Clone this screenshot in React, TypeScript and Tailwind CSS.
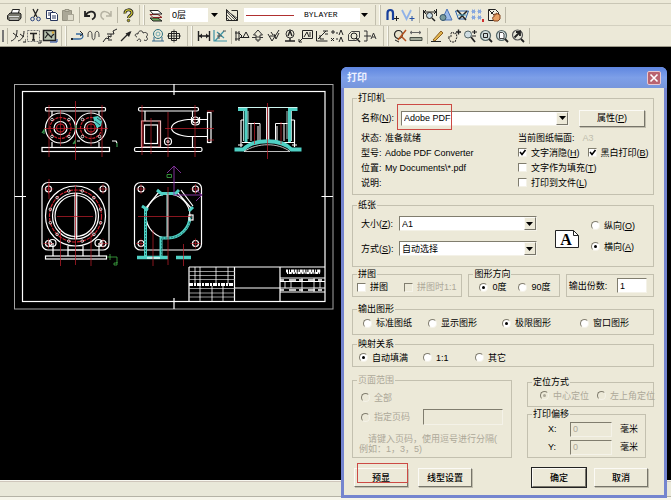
import type { ReactNode } from "react"

const RED = "#c4202c"
const CYAN = "#4fd0c4"
const INK = "#222"

const icons: Record<string, ReactNode> = {
    print: (
        <>
            <path d="M5 7 6.500 2.500h7L12 7" fill="#fff" stroke={INK} />
            <path d="M2.500 7.500 4 6h10l1 1v4l-2 2.500H3L1.500 12V8.500z" fill="#77776c" stroke={INK} />
            <path d="M3 9.500h10M4 12h8" stroke="#ddd" />
        </>
    ),
    cut: (
        <>
            <path d="M5 2l4 8M10 2 6 10" stroke={INK} strokeWidth="1.300" />
            <circle cx="4.500" cy="12" r="1.800" stroke="#26407c" />
            <circle cx="10.500" cy="12" r="1.800" stroke="#26407c" />
        </>
    ),
    copy: (
        <>
            <path d="M2.500 3.500h5l2 2v6h-7z" fill="#fff" stroke="#26345c" />
            <path d="M6.500 5.500h5l2 2v6h-7z" fill="#fff" stroke="#26345c" />
            <path d="M4 6h2M4 8h2M8 9h4M8 11h4" stroke="#26345c" />
        </>
    ),
    paste: (
        <>
            <path d="M2.500 3.500h9v10h-9z" fill="#aaa797" stroke="#959282" />
            <path d="M5 2.500h4v2H5z" fill="#c5c2b2" stroke="#959282" />
            <path d="M7.500 7.500h6v6h-6z" fill="#dedbcb" stroke="#a8a595" />
        </>
    ),
    undo: <path d="M3 4v5h5M3.500 8.500C6 4 12 3 13 7.500c.4 2-1 4-3 5" stroke={INK} strokeWidth="1.800" />,
    redo: <path d="M13 4v5H8M12.500 8.500C10 4 4 3 3 7.500c-.4 2 1 4 3 5" stroke="#b5b2a2" strokeWidth="1.500" />,
    help: (
        <>
            <path d="M5 6.500C4.500 2 12 1.500 12 6c0 2.500-3.500 2.500-3.500 5" stroke={INK} strokeWidth="3" />
            <path d="M5 6.500C4.500 2 12 1.500 12 6c0 2.500-3.500 2.500-3.500 5" stroke="#d9cf35" strokeWidth="1.200" />
            <circle cx="8.500" cy="13.500" r="1.300" fill="#a89e20" stroke={INK} strokeWidth=".7" />
        </>
    ),
    layers: (
        <>
            <path d="M2 11h8l4 3H5z" fill="#6ea85e" stroke={INK} />
            <path d="M2 7.500h8l4 3H5z" fill="#e2e2d8" stroke="#8c2222" />
            <path d="M2 3.500h8l4 3.500H5z" fill="#fff" stroke={INK} />
        </>
    ),
    linetype: (
        <>
            <path d="M2.500 2.500 13.500 13.500M2.500 2.500v11h11v-10h-6" stroke={INK} />
            <path d="M3 5l8 8M3 8l5 5M3 11l2 2M3 4l10 7" stroke="#555" />
        </>
    ),
    snap: (
        <>
            <path d="M3.500 13V6c0-4 5.500-4 5.500 0v7" stroke="#173f9c" strokeWidth="2.200" />
            <path d="M10 11.500h5M12.500 9v5" stroke={INK} />
        </>
    ),
    snapV: (
        <>
            <path d="M2 3l4.500 9L11 3" stroke="#8fb2e8" strokeWidth="1.800" />
            <path d="M9.500 11.500h5M12 9v5" stroke="#2450a4" />
        </>
    ),
    findDim: (
        <>
            <path d="M1.500 3v9M14.500 2v7M2 5h12M4 3 2 5l2 2M12 3l2 2-2 2" stroke={INK} />
            <circle cx="7.500" cy="8.500" r="3" fill="#c7dce8" stroke={INK} />
            <path d="M10 11l3 3" stroke={INK} strokeWidth="1.500" />
        </>
    ),
    prism: (
        <>
            <path d="M9 2 4 13h10z" fill="#9bbbe9" stroke="#4972b8" />
            <circle cx="5" cy="10.500" r="3" fill="#7a9c9c" stroke="#35566c" />
        </>
    ),
    tools: (
        <>
            <path d="M1.500 4h13l-3 8h-7z" stroke="#2861ac" />
            <path d="M3 3l9 10M13 4 5 12" stroke={INK} strokeWidth="1.500" />
            <path d="M4 8h8" stroke="#45a0c8" />
        </>
    ),
    grid: (
        <>
            <path d="M2 3h3v3H2zM8 3h3v3H8zM2 9h3v3H2zM8 9h3v3H8z" fill="#88aae0" stroke="#83a2dc" strokeDasharray="1 1" />
            <path d="M13 12v3" stroke="#d03030" strokeWidth="2" />
        </>
    ),
    drag: (
        <>
            <path d="M2.500 2.500h7l3 3v8h-10z" fill="#f5f2e5" stroke={INK} />
            <path d="M3 3l9 9M5 7l3-3" stroke={INK} />
            <path d="M8 14c-2-3-2-4 0-4V7l2 1V6l2 1 2 1v4l-2 2z" fill="#e7a065" stroke="#82451f" />
        </>
    ),
    arcs: <path d="M1 13C5 12 7 8 7 2M3 5l5 4M8 13c4-1 6-5 6-10M10 6l4 3M13 14h3v-3" stroke={INK} />,
    text: (
        <>
            <path d="M1.500 2.500h12v11h-12z" stroke="#777" strokeDasharray="2 1" />
            <path d="M4 5.500h7M7.500 5v7M6 12h3" stroke={INK} strokeWidth="1.600" />
            <path d="M12 15h3v-3" stroke={INK} />
        </>
    ),
    image: (
        <>
            <path d="M1.500 2.500h12v10h-12z" fill="#b9c4b0" stroke={INK} strokeWidth="1.500" />
            <path d="M3 10l3-4 3 3 3-3M4 4l6 6" stroke={INK} strokeWidth="1.200" />
            <circle cx="11" cy="4.500" r="1.200" fill="#d9a83c" />
            <path d="M8 14h7v-3" stroke="#173f9c" />
        </>
    ),
    polyline: (
        <>
            <path d="M2 11h7c5 0 5-5 1-5H6" stroke="#356aa0" strokeWidth="1.300" />
            <path d="M10 3l3 3-3 2" stroke={INK} />
            <path d="M1 10h2v2H1z" fill={INK} />
        </>
    ),
    wave: <path d="M2 7c0-5 4-5 4 0v1c0 5 3 5 3 0V7c0-5 4-5 4 0M2 7v2M13 7v2" stroke="#444" />,
    zigzag: <path d="M1 14l3-4 3 1-1-3 3 1 0-3 3 0-1-3 4-2M5 6h4M6 12h4" stroke={INK} />,
    arrow: (
        <>
            <path d="M3 13 12 4" stroke={INK} strokeWidth="1.300" />
            <path d="M13.500 3 11 9 7.500 5.500z" fill={INK} />
        </>
    ),
    cloud: (
        <path d="M3 9C0 8 1 5 4 6c0-4 5-4 5-1 4-2 6 2 3 4 3 1 1 5-2 3M3 13c2-4 5-1 3 1" stroke="#333" />
    ),
    bubble: (
        <>
            <circle cx="8" cy="6" r="4.500" stroke="#2e7180" />
            <circle cx="8" cy="6" r="2" stroke="#71a9b2" />
            <path d="M2 13h12M4 13V9M12 13V9" stroke="#36698c" />
        </>
    ),
    hole: (
        <>
            <path d="M2.500 5.500h11v5h-11zM5.500 3.500h5v9h-5z" stroke={INK} />
            <path d="M8 1.500v13M1 8h14" stroke={INK} strokeWidth=".8" />
        </>
    ),
    dim: (
        <>
            <path d="M2.500 3v10M13.500 3v10M3 8h10" stroke={INK} strokeWidth="1.400" />
            <path d="M3 8l3-2.500v5zM13 8l-3-2.500v5z" fill={INK} />
        </>
    ),
    dimAngle: (
        <>
            <path d="M2 2v11h13M3 13l9-10M5 4l7 6" stroke="#3c93a4" strokeWidth="1.200" />
            <path d="M5 8h5M7 5v6M11 3h3" stroke="#555" />
        </>
    ),
    datum: <path d="M2 3v10M1 5h4l3 3-3 3H1M7 9.500h8M9 9.500 12 4l3 5.500M5 3v10" stroke={INK} />,
    height: <path d="M8 2 3.500 7H6v5h4V7h2.500zM6 9h4M2 9.500h4M10 9.500h3M8 12v2" stroke="#333" />,
    rough: <path d="M2 6l4 7 7-11M4 8h5M8 6l2 5 3-6M5 4l2 3" stroke={INK} />,
    weld: (
        <>
            <circle cx="8" cy="6" r="4" stroke="#333" />
            <path d="M6 8l2-5 2 5M3 13h10M8 10v3" stroke={INK} strokeWidth="1.400" />
        </>
    ),
    leader: <path d="M4.500 2.500h10v8h-10zM1 14l4-4M1 11v3h3M6 9l3-5 2 5M12 4v5" stroke={INK} />,
    section: <path d="M2.500 3v10h11M4 11l8-8M6 7v4h4M9 3h5M11 6h3" stroke={INK} />,
    mirror: <path d="M1 4h4M3 2v4M9 7l2-5 2 5M1 10l3 3M4 10l-3 3M9 14l2-5 2 5M6 5h2M6 11h2" stroke={INK} />,
    lookup: (
        <>
            <path d="M2.500 6.500l3-3h8v6l-3 3h-8z" stroke="#444" />
            <circle cx="8" cy="8" r="3" stroke={INK} />
            <path d="M10 10l4 4" stroke={INK} strokeWidth="1.600" />
        </>
    ),
    branch: <path d="M2 3h3v10H2M2 8h7M9 11l2.500-6 2.500 6M10 9h3" stroke="#333" />,
    erase: (
        <>
            <circle cx="6.500" cy="6.500" r="4" fill="#e8e2cc" stroke={INK} strokeWidth="1.200" />
            <path d="M14 2 6 12M9 8l5 5" stroke="#b4521f" strokeWidth="1.500" />
            <path d="M3 12l4 2" stroke={INK} />
        </>
    ),
    ruler: (
        <>
            <path d="M2 4.500h11M4 3 2 4.500 4 6M11 3l2 1.500L11 6" stroke="#666" />
            <path d="M2 9.500h12v3H2z" fill="#a3a99a" stroke="#474e46" />
        </>
    ),
    pencil: (
        <>
            <path d="M3 12 11 3l2 2-8 8z" fill="#e2b64f" stroke="#8b5e22" />
            <path d="M1 13.500h10" stroke={INK} />
        </>
    ),
    pan: (
        <>
            <path d="M5 14 2 9l3 0V5l2-1 1 2 2-1 1 4-2 5z" fill="#eee8d4" stroke={INK} strokeDasharray="2 1" />
            <path d="M10 4h5M12.500 1.500v5" stroke={INK} strokeWidth="1.400" />
        </>
    ),
    zoom: (
        <>
            <circle cx="6" cy="6.500" r="3.500" fill="#cfdde2" stroke="#566" />
            <path d="M9 9l4 5" stroke={INK} strokeWidth="1.700" />
            <path d="M10 4h5M12.500 2v4M10 8h4" stroke={INK} strokeWidth="1.200" />
        </>
    ),
    zoomWindow: (
        <>
            <circle cx="7.500" cy="7.500" r="5" fill="#cfdcdc" stroke="#566" strokeWidth="1.200" />
            <path d="M5.500 5.500h4v4h-4z" stroke={INK} />
            <path d="M11 11l3 3" stroke={INK} strokeWidth="1.800" />
        </>
    ),
    zoomPage: (
        <>
            <circle cx="7.500" cy="7.500" r="5" fill="#cfdcdc" stroke="#566" strokeWidth="1.200" />
            <path d="M5.500 4.500h3l1.500 1.500v4.500H5.500z" fill="#fff" stroke="#444" />
            <path d="M11 11l3 3" stroke={INK} strokeWidth="1.800" />
        </>
    ),
    zoomBack: (
        <>
            <circle cx="7.500" cy="7" r="5" fill="#e5e5d8" stroke="#555" strokeWidth="1.200" />
            <path d="M4.500 9.500 10 4v4M10 4H6" stroke={INK} strokeWidth="1.800" />
            <path d="M11 11l3 3" stroke={INK} strokeWidth="1.800" />
        </>
    ),
}

function Tool({ name }: { name: string }) {
    return (
        <button type="button" aria-label={name} className="w-4 h-4 shrink-0">
            <svg viewBox="0 0 16 16" className="w-4 h-4" fill="none">{icons[name]}</svg>
        </button>
    )
}

function Tools({ names }: { names: string[] }) {
    return <>{names.map((name) => <Tool key={name} name={name} />)}</>
}

function Sep() {
    return (
        <div className="w-1.5 h-4 shrink-0 flex justify-center">
            <div className="w-px bg-[#bab7a6]" />
        </div>
    )
}

function Grip() {
    return (
        <div className="w-3 h-5 shrink-0 flex justify-center gap-[3px]">
            <div className="w-px bg-[#c2bfae]" />
            <div className="w-0.5 bg-[#faf9f2] border-r border-[#c2bfae]" />
        </div>
    )
}

function Triangle() {
    return (
        <svg viewBox="0 0 7 4" className="w-[7px] h-1" fill="#000">
            <path d="M0 0h7L3.500 4z" />
        </svg>
    )
}

function Toolbars() {
    return (
        <header className="bg-[#ece9d8] border-b border-[#9c9989] overflow-hidden">
            <div className="h-1 border-b border-[#c9c6b5]" />
            <div className="h-[22px] flex items-center pl-1.5 border-b border-[#d3d0c0]">
                <Tool name="print" />
                <Sep />
                <Tools names={["cut", "copy", "paste"]} />
                <Sep />
                <Tools names={["undo", "redo"]} />
                <Sep />
                <Tool name="help" />
                <Grip />
                <Tool name="layers" />
                <div className="relative ml-1.5 w-[52px] shrink-0">
                    <select aria-label="图层" className="block appearance-none w-[38px] h-3.5 bg-white pl-0.5 text-[9px] leading-[14px]">
                        <option>0层</option>
                    </select>
                    <span className="absolute right-1 top-[5px] pointer-events-none"><Triangle /></span>
                </div>
                <span className="ml-0.5 flex"><Tool name="linetype" /></span>
                <div className="relative ml-1 w-32 shrink-0">
                    <select
                        aria-label="线型"
                        className="block appearance-none w-[116px] h-3.5 bg-white pl-[60px] font-['Liberation_Mono',monospace] text-[8px] leading-[14px]"
                    >
                        <option>BYLAYER</option>
                    </select>
                    <span className="absolute left-0.5 top-[7px] w-12 h-px bg-[#b03030] pointer-events-none" />
                    <span className="absolute right-1 top-[5px] pointer-events-none"><Triangle /></span>
                </div>
                <Grip />
                <Tools names={["snap", "snapV"]} />
                <Sep />
                <Tools names={["findDim", "prism", "tools", "grid", "drag"]} />
                <Sep />
            </div>
            <div className="h-5 flex items-center">
                <div className="w-1 h-3 shrink-0 border-r-2 border-[#777]" />
                <Sep />
                <Tools names={["arcs", "text", "image"]} />
                <Grip />
                <div className="flex pr-0.5">
                    <Tools names={["polyline", "wave", "zigzag", "arrow", "cloud", "bubble", "hole"]} />
                </div>
                <Grip />
                <Tools names={["dim", "dimAngle"]} />
                <Sep />
                <div className="flex pr-0.5">
                    <Tools names={["datum", "height", "rough", "weld", "leader", "section", "mirror", "lookup", "branch"]} />
                </div>
                <Grip />
                <Tools names={["erase", "ruler"]} />
                <Sep />
                <Tools names={["pencil", "pan", "zoom", "zoomWindow", "zoomPage", "zoomBack"]} />
                <Sep />
            </div>
        </header>
    )
}

function Bolts({ cx, cy, r, count, start }: { cx: number; cy: number; r: number; count: number; start: number }) {
    return (
        <>
            {Array.from({ length: count }, (_, i) => {
                const a = ((start + (i * 360) / count) * Math.PI) / 180
                return <circle key={i} cx={cx + r * Math.cos(a)} cy={cy + r * Math.sin(a)} r="1.300" strokeWidth=".8" />
            })}
        </>
    )
}

function Impeller({ cx }: { cx: number }) {
    return (
        <>
            <circle cx={cx} cy="128" r="15" />
            <circle cx={cx} cy="128" r="10.500" stroke={RED} strokeDasharray="3 1" />
            <circle cx={cx} cy="128" r="6.500" />
            <circle cx={cx} cy="128" r="4" stroke={RED} />
            <Bolts cx={cx} cy={128} r={12} count={4} start={45} />
            <path d={`M${cx} 110v36`} stroke={RED} strokeWidth=".6" />
        </>
    )
}

function Plate({ x }: { x: number }) {
    return (
        <>
            <rect x={x} y="182.500" width="67" height="67.500" rx="6" />
            {[[6.5, 189], [61, 189], [6.5, 243.500], [61, 243.500]].map(([dx, y]) => (
                <g key={`${dx}-${y}`}>
                    <circle cx={x + dx} cy={y} r="3" />
                    <path d={`M${x + dx - 5} ${y}h10M${x + dx} ${y - 5}v10`} stroke={RED} strokeWidth=".6" />
                </g>
            ))}
        </>
    )
}

function Sheet() {
    return (
        <svg viewBox="14 84 320 226" className="w-80 shrink-0" fill="none" stroke="#fff" strokeWidth="1.200">
            <rect x="14.500" y="84.500" width="318.500" height="224.500" stroke="#a5a5a5" strokeWidth="1" />
            <rect x="22.500" y="91.500" width="302.500" height="210" />
            <path d="M174 84v11M174 298v11M14.500 196.500h11.500M321.500 196.500h11.500" />

            {/* front view */}
            <rect x="45.500" y="107.500" width="60" height="3.500" rx="1" />
            <path d="M52 111v5M99 111v4M52 142v5M99 142v5" />
            <rect x="42" y="147.500" width="67.500" height="4" />
            <Impeller cx={60.5} />
            <Impeller cx={91} />
            <path d="M75.500 101v59M44 128.500h64M49 105v52M102 105v52" stroke={RED} strokeWidth=".7" />
            <path d="M93 117l5-1 4 5-1 5-4 2-2-4z" fill={CYAN} stroke="none" />
            <path d="M95 121l5 4M97 118l4 3" stroke="#123" strokeWidth=".8" />
            <path d="M42 133l2-3v4M73 144l2-3v3M76 125v5M117 143v4" stroke="#3a9a50" />
            <path d="M112 141h4l1 2M77 141h3" />

            {/* side view */}
            <rect x="138.500" y="107.500" width="60" height="3.500" rx="1.500" />
            <path d="M145 111v10M192.500 111v6M192.500 137v10" />
            <rect x="141.500" y="121" width="19" height="26" stroke="#e8b9b9" />
            <rect x="144.500" y="125" width="13" height="18.500" />
            <rect x="134.500" y="147.500" width="67.500" height="4" rx="1.500" />
            <path d="M207 119.500h-19c-22 2-22 15 0 17h19" />
            <rect x="207.500" y="112.500" width="3.500" height="30" />
            <path d="M191.500 117v5c0 4 8 4 8 0v-5" />
            <circle cx="195.500" cy="120" r="3" />
            <circle cx="168" cy="141.500" r="3.500" />
            <circle cx="168" cy="141.500" r="1" />
            <path d="M151 118v36M168 112v45M165 128.500h49M143 121v26M159 121v26M207 111h7M207 140h7M142 105v50M195 105v52" stroke={RED} strokeWidth=".7" />

            {/* cross section */}
            <path d="M238 107.500h59.500" stroke="#cdf5f0" />
            <path d="M238 109.500h8v33M297.500 109.500h-8v33" stroke={CYAN} strokeWidth="3" />
            <path d="M243.500 111v30M248 111v28M287 111v28M291.500 111v30" stroke="#d6fffa" strokeWidth=".8" />
            <path d="M266.700 108v33M268.700 108v33M241 120v27M241 120h3M294.500 120v27M291 120h3.500M242 142.500h52" />
            <path d="M248 123.500h12v17M251 123v18M258 126v15M275.500 141v-17.500h12M277 126v15M284 123v18" strokeWidth="1" />
            <path d="M234.500 149.500h9c10-11 38-11 48 0h10" stroke={CYAN} strokeWidth="4" />
            <path d="M244 151.500c14-9 34-9 46 0z" fill="#000" stroke="#eee" strokeWidth=".8" />
            <path d="M238 145h5M292 145h5" />
            <path d="M267.500 103v56M254.500 122v22M281 122v22" stroke={RED} strokeWidth=".7" />

            {/* round flange */}
            <Plate x={42} />
            <circle cx="75.500" cy="216" r="30" fill="#000" />
            <circle cx="75.500" cy="216" r="26" stroke={RED} strokeDasharray="4 1" />
            <circle cx="75.500" cy="216" r="23" />
            <circle cx="75.500" cy="216" r="20.500" />
            <Bolts cx={75.5} cy={216} r={26} count={12} start={15} />
            <path d="M75 193v46M76.700 193v46" />
            <path d="M53 243v13M68 246v10M83 246v10M99 243v13M68 250h15" />
            <circle cx="52.500" cy="243" r="3.500" />
            <circle cx="98.500" cy="243" r="3.500" />
            <rect x="45.500" y="256" width="61" height="3" />
            <path d="M49 179v20M57 216.500h36M60.500 230v36M91 230v36M75.500 185v80" stroke={RED} strokeWidth=".7" />
            <path d="M107 257h10v6h-3v2h3v-3M110 254v6" stroke="#3fae45" strokeWidth=".8" />

            {/* cut flange */}
            <Plate x={134.5} />
            <circle cx="168" cy="216" r="22" />
            <path d="M146 208l13-16M177 192l14 16M181 190l12 16" />
            <path d="M190 216c0 12-10 22-22 22h-7v18M145.500 208v48M162 193.500h14" stroke={CYAN} strokeWidth="3" />
            <path d="M190.500 216c0 12-10 22-22 22h-7v18M145.500 208v48" stroke="#125a55" strokeWidth=".8" strokeDasharray="2 1" />
            <path d="M142 206l6 4M157 190l6 5M175 194l4-4M189 211l4-4" stroke={CYAN} strokeWidth="3" />
            <rect x="189" y="215" width="4" height="5" />
            <path d="M167.500 194v43" stroke="#a5eee6" strokeWidth="2" />
            <path d="M137 257.500h31M176 257.500h15" stroke={CYAN} strokeWidth="3.500" />
            <path d="M147 258h13" />
            <path d="M138 216.500h53M153 230v36M168 187v78M183.500 244v22" stroke={RED} strokeWidth=".7" />
            <path d="M174 167v28h28M167 173l7-7 7 7M196 190l6 5-6 6" stroke="#8d35a8" strokeWidth=".9" />
            <path d="M167 174.500h4.500v3H167z" stroke="#3fae45" strokeWidth=".8" />

            {/* title block */}
            <path d="M189 267h136M189 267v34M234.500 267v34M280 267v34M234.500 288h45.500" />
            <path d="M189 271.500h45.500M189 275.500h45.500M189 279.500h45.500M189 288.500h45.500M189 293h45.500M189 297h45.500" stroke="#bbb" strokeWidth=".8" />
            <path d="M195 267v19M200 267v34M216 267v17M228 267v17M212 286v15M223 286v15" strokeWidth=".8" />
            <path d="M189 284.500h45.500" strokeWidth="3" strokeDasharray="4 1 2 1" />
            <path d="M286 271h35" strokeWidth="3" strokeDasharray="2 1 1 1 3 .7" />
            <path d="M287 273h33" strokeWidth="2" strokeDasharray="1 .8 3 1 2 1" />
            <path d="M280 278h45M280 281.500h45M280 288h45M280 292h45" strokeWidth="1" />
            <path d="M280 280h45M280 290h45" strokeWidth="1.500" strokeDasharray="4 5 7 3" />
            <path d="M285 282v6M291 282v6M302 278v14M314 278v14M320 282v6" strokeWidth=".8" />
        </svg>
    )
}

function Group({ title, className = "", muted = false, children }: { title: string; className?: string; muted?: boolean; children: ReactNode }) {
    return (
        <fieldset className={`min-w-0 border border-[#c3c0af] ${className}`}>
            <legend className={`ml-1 px-px h-3 leading-3 ${muted ? "text-[#aca899]" : ""}`}>{title}</legend>
            {children}
        </fieldset>
    )
}

function Check({ label, hotkey, checked, disabled }: { label: string; hotkey?: string; checked?: boolean; disabled?: boolean }) {
    return (
        <label className={`relative flex items-center gap-1 whitespace-nowrap ${disabled ? "text-[#aca899]" : ""}`}>
            <input
                type="checkbox"
                defaultChecked={checked}
                disabled={disabled}
                className="peer appearance-none size-[9px] shrink-0 border border-t-[#807d6e] border-l-[#807d6e] border-b-[#f4f2e8] border-r-[#f4f2e8] bg-white disabled:bg-[#ece9d8]"
            />
            <svg viewBox="0 0 9 9" className="absolute left-0 size-[9px] hidden peer-checked:block pointer-events-none" fill="none">
                <path d="M2 4l2 2.500L7.500 2" stroke="#000" strokeWidth="1.600" />
            </svg>
            <span>{label}{hotkey && <>(<u>{hotkey}</u>)</>}</span>
        </label>
    )
}

function Radio({ name, label, hotkey, checked, disabled }: { name: string; label: string; hotkey?: string; checked?: boolean; disabled?: boolean }) {
    return (
        <label className={`flex items-center gap-1 whitespace-nowrap ${disabled ? "text-[#aca899]" : ""}`}>
            <input
                type="radio"
                name={name}
                defaultChecked={checked}
                disabled={disabled}
                className="appearance-none size-[9px] shrink-0 rounded-full border border-t-[#807d6e] border-l-[#807d6e] border-b-[#f4f2e8] border-r-[#f4f2e8] bg-white flex items-center justify-center before:size-[3px] before:rounded-full checked:before:bg-black disabled:bg-[#ece9d8] disabled:checked:before:bg-[#aca899]"
            />
            <span>{label}{hotkey && <>(<u>{hotkey}</u>)</>}</span>
        </label>
    )
}

function Combo({ id, value }: { id: string; value: string }) {
    return (
        <div className="relative flex-1">
            <select
                id={id}
                className="block appearance-none w-full h-[15px] bg-white border border-t-[#807d6e] border-l-[#807d6e] border-[#f4f2e8] pl-0.5 leading-3"
            >
                <option>{value}</option>
            </select>
            <span className="absolute right-px top-px h-[13px] w-3 flex items-center justify-center bg-[#ece9d8] border border-[#fbfaf5] border-r-[#77756a] border-b-[#77756a] pointer-events-none">
                <Triangle />
            </span>
        </div>
    )
}

const field = "border border-t-[#807d6e] border-l-[#807d6e] border-[#f4f2e8] pl-0.5"
const button = "bg-[#ece9d8] border border-[#fbfaf5] border-r-[#77756a] border-b-[#77756a] shadow-[1px_1px_0_#c0bdad]"

function PrintDialog() {
    return (
        <div
            role="dialog"
            aria-label="打印"
            className="absolute right-1 top-5 w-[326px] rounded-t-md border-[3px] border-t-0 border-[#7585cf] bg-[#ece9d8] text-[9px] leading-3 text-black"
        >
            <div className="-mx-[3px] h-[21px] px-1.5 flex items-center justify-between rounded-t-md bg-linear-to-b from-[#5f86e0] via-[#7d9fe8] to-[#7796dc]">
                <h1 className="font-bold text-[10px] text-[#eef2ff]">打印</h1>
                <button type="button" aria-label="关闭" className="size-3.5 rounded-xs border border-[#e8c8d0] bg-[#b9636f] flex items-center justify-center">
                    <svg viewBox="0 0 10 10" className="size-2.5" fill="none" stroke="#fff" strokeWidth="1.600">
                        <path d="M1.500 1.500l7 7M8.500 1.500l-7 7" />
                    </svg>
                </button>
            </div>

            <form className="pt-1 pl-2 pr-2.5 pb-2" onSubmit={(event) => event.preventDefault()}>
                <Group title="打印机" className="pb-1">
                    <div className="relative mt-1 h-5 flex items-center pl-2 pr-2">
                        <label htmlFor="printer" className="w-10">名称(<u>N</u>):</label>
                        <Combo id="printer" value="Adobe PDF" />
                        <button type="button" className={`ml-2.5 w-[66px] h-[17px] ${button}`}>属性(<u>P</u>)</button>
                        <span className="absolute left-11 -top-1 w-[55px] h-[26px] border border-[#cc4a44] pointer-events-none" />
                    </div>
                    <div className="mt-0.5 pl-2 grid grid-cols-[157fr_135fr]">
                        <dl className="grid grid-cols-[24px_1fr] auto-rows-[15px] items-center">
                            <dt>状态:</dt>
                            <dd>准备就绪</dd>
                            <dt>型号:</dt>
                            <dd>Adobe PDF Converter</dd>
                            <dt>位置:</dt>
                            <dd>My Documents\*.pdf</dd>
                            <dt>说明:</dt>
                            <dd />
                        </dl>
                        <div className="grid auto-rows-[15px] items-center">
                            <p className="flex gap-2">当前图纸幅面:<span className="text-[#c0bdad]">A3</span></p>
                            <div className="flex gap-2">
                                <Check label="文字消隐" hotkey="H" checked />
                                <Check label="黑白打印" hotkey="B" checked />
                            </div>
                            <Check label="文字作为填充" hotkey="T" />
                            <Check label="打印到文件" hotkey="L" />
                        </div>
                    </div>
                </Group>

                <Group title="纸张" className="mt-1 pb-[5px]">
                    <div className="flex items-center pl-2 pr-[18px]">
                        <div className="flex-1 grid auto-rows-[25px] items-center">
                            <div className="flex items-center">
                                <label htmlFor="size" className="w-[38px]">大小(<u>Z</u>):</label>
                                <Combo id="size" value="A1" />
                            </div>
                            <div className="flex items-center">
                                <label htmlFor="mode" className="w-[38px]">方式(<u>S</u>):</label>
                                <Combo id="mode" value="自动选择" />
                            </div>
                        </div>
                        <svg viewBox="0 0 24 18" className="ml-[18px] mt-1.5 w-6 h-[18px]">
                            <path d="M.5.5h18l5 5v12H.5z" fill="#fff" stroke="#222" />
                            <path d="M18.500.5v5h5" fill="none" stroke="#222" />
                            <text x="11" y="15" textAnchor="middle" fontSize="16" fontWeight="bold" fontFamily="Liberation Serif, serif">A</text>
                        </svg>
                        <div className="ml-3 grid auto-rows-[21px] items-center">
                            <Radio name="paper" label="纵向" hotkey="O" />
                            <Radio name="paper" label="横向" hotkey="A" checked />
                        </div>
                    </div>
                </Group>

                <div className="mt-px grid grid-cols-[110fr_91fr_88fr] items-end gap-1.5">
                    <Group title="拼图" className="pb-0.5">
                        <div className="h-3.5 pl-1 flex items-center gap-4">
                            <Check label="拼图" />
                            <Check label="拼图时1:1" disabled />
                        </div>
                    </Group>
                    <Group title="图形方向" className="pb-0.5">
                        <div className="h-3.5 pl-2.5 flex items-center gap-3">
                            <Radio name="angle" label="0度" checked />
                            <Radio name="angle" label="90度" />
                        </div>
                    </Group>
                    <div className="h-[23px] border border-[#c3c0af] pl-0.5 pr-1.5 flex items-center justify-between">
                        <label htmlFor="copies" className="whitespace-nowrap">输出份数:</label>
                        <input id="copies" defaultValue="1" className={`w-[30px] h-[15px] bg-white ${field}`} />
                    </div>
                </div>

                <Group title="输出图形" className="mt-1.5 pb-[3px]">
                    <div className="h-4 pl-2.5 grid grid-cols-[65fr_74fr_78fr_73fr] items-center">
                        <Radio name="output" label="标准图纸" />
                        <Radio name="output" label="显示图形" />
                        <Radio name="output" label="极限图形" checked />
                        <Radio name="output" label="窗口图形" />
                    </div>
                </Group>

                <Group title="映射关系" className="mt-[3px] pb-px">
                    <div className="h-[15px] pl-1.5 grid grid-cols-[64fr_52fr_178fr] items-center">
                        <Radio name="mapping" label="自动填满" checked />
                        <Radio name="mapping" label="1:1" />
                        <Radio name="mapping" label="其它" />
                    </div>
                </Group>

                <div className="mt-[7px] grid grid-cols-[160fr_127fr] gap-[15px]">
                    <Group title="页面范围" muted>
                        <div className="pt-0.5 pl-2 pr-2">
                            <div className="h-[19px] flex items-center">
                                <Radio name="range" label="全部" disabled />
                            </div>
                            <div className="h-5 flex items-center justify-between">
                                <Radio name="range" label="指定页码" disabled />
                                <input aria-label="指定页码" disabled className={`w-20 h-4 ${field}`} />
                            </div>
                        </div>
                        <p className="pt-[7px] pl-1.5 indent-[9px] leading-[10px] whitespace-nowrap text-[#aca899]">
                            请键入页码，使用逗号进行分隔(<br />例如：1，3，5)
                        </p>
                    </Group>
                    <div className="pt-0.5 min-w-0">
                        <Group title="定位方式" className="pb-[3px]">
                            <div className="h-[15px] pl-3 flex items-center gap-2">
                                <Radio name="anchor" label="中心定位" checked disabled />
                                <Radio name="anchor" label="左上角定位" disabled />
                            </div>
                        </Group>
                        <Group title="打印偏移" className="mt-px mr-2 pb-px">
                            {["X", "Y"].map((axis) => (
                                <div key={axis} className="h-[18px] pl-5 flex items-center whitespace-nowrap">
                                    <label htmlFor={`offset-${axis}`} className="w-[22px] shrink-0">{axis}:</label>
                                    <input
                                        id={`offset-${axis}`}
                                        defaultValue="0"
                                        disabled
                                        className={`w-[42px] shrink-0 h-[15px] mr-2 text-[#aca899] ${field}`}
                                    />
                                    毫米
                                </div>
                            ))}
                        </Group>
                    </div>
                </div>

                <div className="relative mt-2.5 flex pl-0.5 pr-1.5 font-medium">
                    <button type="button" className={`w-[54px] h-[19px] ${button}`}>预显</button>
                    <button type="button" className={`ml-2.5 w-[54px] h-[19px] ${button}`}>线型设置</button>
                    <button type="submit" className={`ml-auto w-[54px] h-[19px] ring-1 ring-[#222] ${button}`}>确定</button>
                    <button type="button" className={`ml-2 w-[54px] h-[19px] ${button}`}>取消</button>
                    <span className="absolute left-[5px] -top-[5px] w-[51px] h-5 border border-[#cc4a44] pointer-events-none" />
                </div>
            </form>
        </div>
    )
}

function App() {
    return (
        <div className="min-h-screen flex flex-col bg-black font-['Liberation_Sans','Noto_Sans_CJK_SC',sans-serif] text-black">
            <Toolbars />
            <main className="relative flex-1 flex flex-col min-h-[453px]">
                <div className="flex-1 pt-[37px] pl-3.5 flex items-start">
                    <Sheet />
                </div>
                <footer className="border-t border-[#f8f7f0] bg-[#f6f5ea] pb-[3px]">
                    <div className="h-4 bg-[#e9e8d9] border-y border-t-[#cfc6bb] border-b-[#b5b3a6]" />
                </footer>
                <PrintDialog />
            </main>
        </div>
    )
}

export default App
